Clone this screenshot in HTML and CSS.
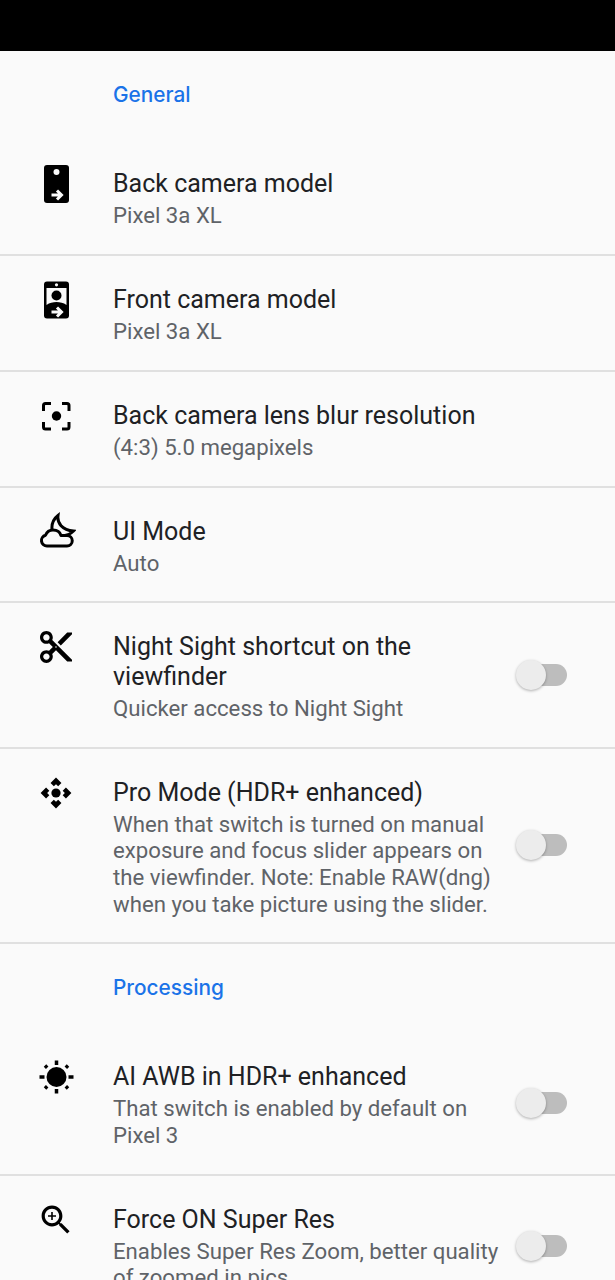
FILE: index.html
```html
<!DOCTYPE html>
<html lang="en">
<head>
    <meta charset="UTF-8">
    <meta name="viewport" content="width=device-width, initial-scale=1.0">
    <title>Settings</title>
    <link rel="stylesheet" href="styles.css">
</head>
<body>
    <div class="status-bar"></div>

    <div class="section-title">General</div>

    <div class="row">
        <svg class="icon" viewBox="0 0 40 40">
            <rect x="8" y="1" width="25" height="38" rx="3"/>
            <circle cx="20.5" cy="8" r="3" fill="#fafafa"/>
            <path d="M15.5 31h9M21 26.5l4.500 4.500-4.500 4.500" class="arrow"/>
        </svg>
        <div class="text">
            <div class="name">Back camera model</div>
            <div class="desc">Pixel 3a XL</div>
        </div>
    </div>

    <div class="row">
        <svg class="icon" viewBox="0 0 40 40">
            <rect x="8" y="1.5" width="25" height="37" rx="3"/>
            <circle cx="20.5" cy="4.800" r="1.600" fill="#fafafa"/>
            <path d="M10.500 8h20v17c-3-2.200-6.500-3-10-3s-7 .8-10 3z" fill="#fafafa"/>
            <circle cx="20.500" cy="15.500" r="5"/>
            <path d="M15.500 32h9M21 27.500l4.500 4.500-4.500 4.500" class="arrow"/>
        </svg>
        <div class="text">
            <div class="name">Front camera model</div>
            <div class="desc">Pixel 3a XL</div>
        </div>
    </div>

    <div class="row">
        <svg class="icon" viewBox="0 0 40 40">
            <path d="M7.500 15v-5.500a2 2 0 0 1 2-2h5.500M26 7.500h5a2 2 0 0 1 2 2v5.500M33 26v5a2 2 0 0 1-2 2h-5M15 33h-5.500a2 2 0 0 1-2-2v-5" class="line"/>
            <circle cx="20.500" cy="20" r="4.700"/>
        </svg>
        <div class="text">
            <div class="name">Back camera lens blur resolution</div>
            <div class="desc">(4:3) 5.0 megapixels</div>
        </div>
    </div>

    <div class="row">
        <svg class="icon" viewBox="0 1 40 40">
            <path d="M11 35a5.500 5.500 0 0 1-1.500-10.800C11 20.500 14 19 17 19c4 0 7 2 8 5.500h6a5.250 5.250 0 0 1 0 10.500z" class="line"/>
            <path d="M16 18.500C15.500 13 17.500 8 22 4.500 21 12 26 19 37.500 20 35 22.500 32 24 29 24.500" class="moon"/>
        </svg>
        <div class="text">
            <div class="name">UI Mode</div>
            <div class="desc">Auto</div>
        </div>
    </div>

    <div class="row">
        <svg class="icon" viewBox="-0.500 -0.500 25 25">
            <path d="M9.640 7.640c.23-.5.36-1.050.36-1.640 0-2.210-1.790-4-4-4S2 3.790 2 6s1.790 4 4 4c.59 0 1.140-.13 1.640-.36L10 12l-2.360 2.360C7.140 14.130 6.590 14 6 14c-2.210 0-4 1.790-4 4s1.790 4 4 4 4-1.790 4-4c0-.59-.13-1.140-.36-1.640L12 14l7 7h3v-1L9.640 7.640zM6 8c-1.100 0-2-.89-2-2s.9-2 2-2 2 .89 2 2-.9 2-2 2zm0 12c-1.100 0-2-.89-2-2s.9-2 2-2 2 .89 2 2-.9 2-2 2zm6-7.500c-.28 0-.5-.22-.5-.5s.22-.5.5-.5.5.22.5.5-.22.5-.5.5zM19 3l-6 6 2 2 7-7V3z"/>
        </svg>
        <div class="text">
            <div class="name">Night Sight shortcut on the viewfinder</div>
            <div class="desc">Quicker access to Night Sight</div>
        </div>
        <div class="switch"><div class="thumb"></div></div>
    </div>

    <div class="row">
        <svg class="icon" viewBox="-1 -1 26 26">
            <path d="M15.540 5.540L13.410 7.660 12 6.250 10.590 7.660 8.460 5.540 12 2l3.540 3.540zm2.920 10l-2.120-2.120L17.750 12l-1.410-1.410 2.120-2.130L22 12l-3.540 3.540zm-10 2.920l2.120-2.120L12 17.750l1.410-1.410 2.120 2.120L12 22l-3.540-3.540zm-2.920-10l2.120 2.120L6.250 12l1.410 1.410-2.120 2.130L2 12l3.540-3.540z"/>
            <circle cx="12" cy="12" r="3"/>
        </svg>
        <div class="text">
            <div class="name">Pro Mode (HDR+ enhanced)</div>
            <div class="desc">When that switch is turned on manual exposure and focus slider appears on the viewfinder. Note: Enable RAW(dng) when you take picture using the slider.</div>
        </div>
        <div class="switch"><div class="thumb"></div></div>
    </div>

    <div class="section-title">Processing</div>

    <div class="row">
        <svg class="icon" viewBox="0 0 40 40">
            <circle cx="20.500" cy="20" r="10"/>
            <path d="M20.500 3.500v4.500M20.500 32v4.500M3.500 20h5M32.500 20h5M9 8.500l2.200 2.200M29.800 29.300l2.200 2.200M9 31.500l2.200-2.200M29.800 10.700l2.200-2.200" class="ray"/>
        </svg>
        <div class="text">
            <div class="name">AI AWB in HDR+ enhanced</div>
            <div class="desc">That switch is enabled by default on Pixel 3</div>
        </div>
        <div class="switch"><div class="thumb"></div></div>
    </div>

    <div class="row">
        <svg class="icon" viewBox="-0.500 -0.500 25 25">
            <path d="M15.500 14h-.79l-.28-.27C15.410 12.590 16 11.110 16 9.500 16 5.910 13.090 3 9.500 3S3 5.910 3 9.500 5.910 16 9.500 16c1.610 0 3.090-.59 4.230-1.570l.27.28v.79l5 4.990L20.490 19l-4.990-5zm-6 0C7.010 14 5 11.990 5 9.500S7.010 5 9.500 5 14 7.010 14 9.500 11.990 14 9.500 14zm2.500-4h-2v2H9v-2H7V9h2V7h1v2h2v1z"/>
        </svg>
        <div class="text">
            <div class="name">Force ON Super Res</div>
            <div class="desc">Enables Super Res Zoom, better quality of zoomed in pics</div>
        </div>
        <div class="switch"><div class="thumb"></div></div>
    </div>
</body>
</html>
```

FILE: styles.css
```css
html, body {
    height: 1280px;
    overflow: hidden;
}
body {
    margin: 0;
    background: #fafafa;
    font-family: Roboto, "Noto Sans", sans-serif;
    color: #202124;
}
.status-bar {
    height: 51px;
    background: #000;
}
.section-title {
    height: 89px;
    padding-left: 113px;
    box-sizing: border-box;
    line-height: 88px;
    font-family: Inter, Roboto, sans-serif;
    font-size: 20.800px;
    font-weight: 500;
    color: #1a73e8;
}
.row {
    display: flex;
    align-items: center;
    box-sizing: border-box;
    padding: 29px 48px 25.250px 36px;
    border-bottom: 2px solid #e0e0e0;
    position: relative;
}
.icon {
    position: absolute;
    left: 36px;
    top: 24px;
    width: 40px;
    height: 40px;
}
.text {
    margin-left: 77px;
    width: 392px;
    flex: none;
}
.name {
    font-size: 25px;
    line-height: 29.500px;
    margin-bottom: 3.500px;
}
.desc {
    font-size: 22.200px;
    line-height: 26.600px;
    color: #5f6368;
}
.switch {
    position: relative;
    margin-left: auto;
    margin-bottom: 4px;
    width: 40px;
    height: 22px;
    border-radius: 11px;
    background: #bdbdbd;
}
.thumb {
    position: absolute;
    left: -11px;
    top: -4px;
    width: 30px;
    height: 30px;
    border-radius: 50%;
    background: #ececec;
    box-shadow: 0 1px 3px rgba(0, 0, 0, 0.3);
}
.arrow {
    fill: none;
    stroke: #fafafa;
    stroke-width: 3;
}
.line {
    fill: none;
    stroke: #000;
    stroke-width: 3;
    stroke-linejoin: round;
}
.moon {
    fill: none;
    stroke: #000;
    stroke-width: 3;
    stroke-linejoin: miter;
    stroke-miterlimit: 10;
}
.ray {
    fill: none;
    stroke: #000;
    stroke-width: 3.500;
}
```
